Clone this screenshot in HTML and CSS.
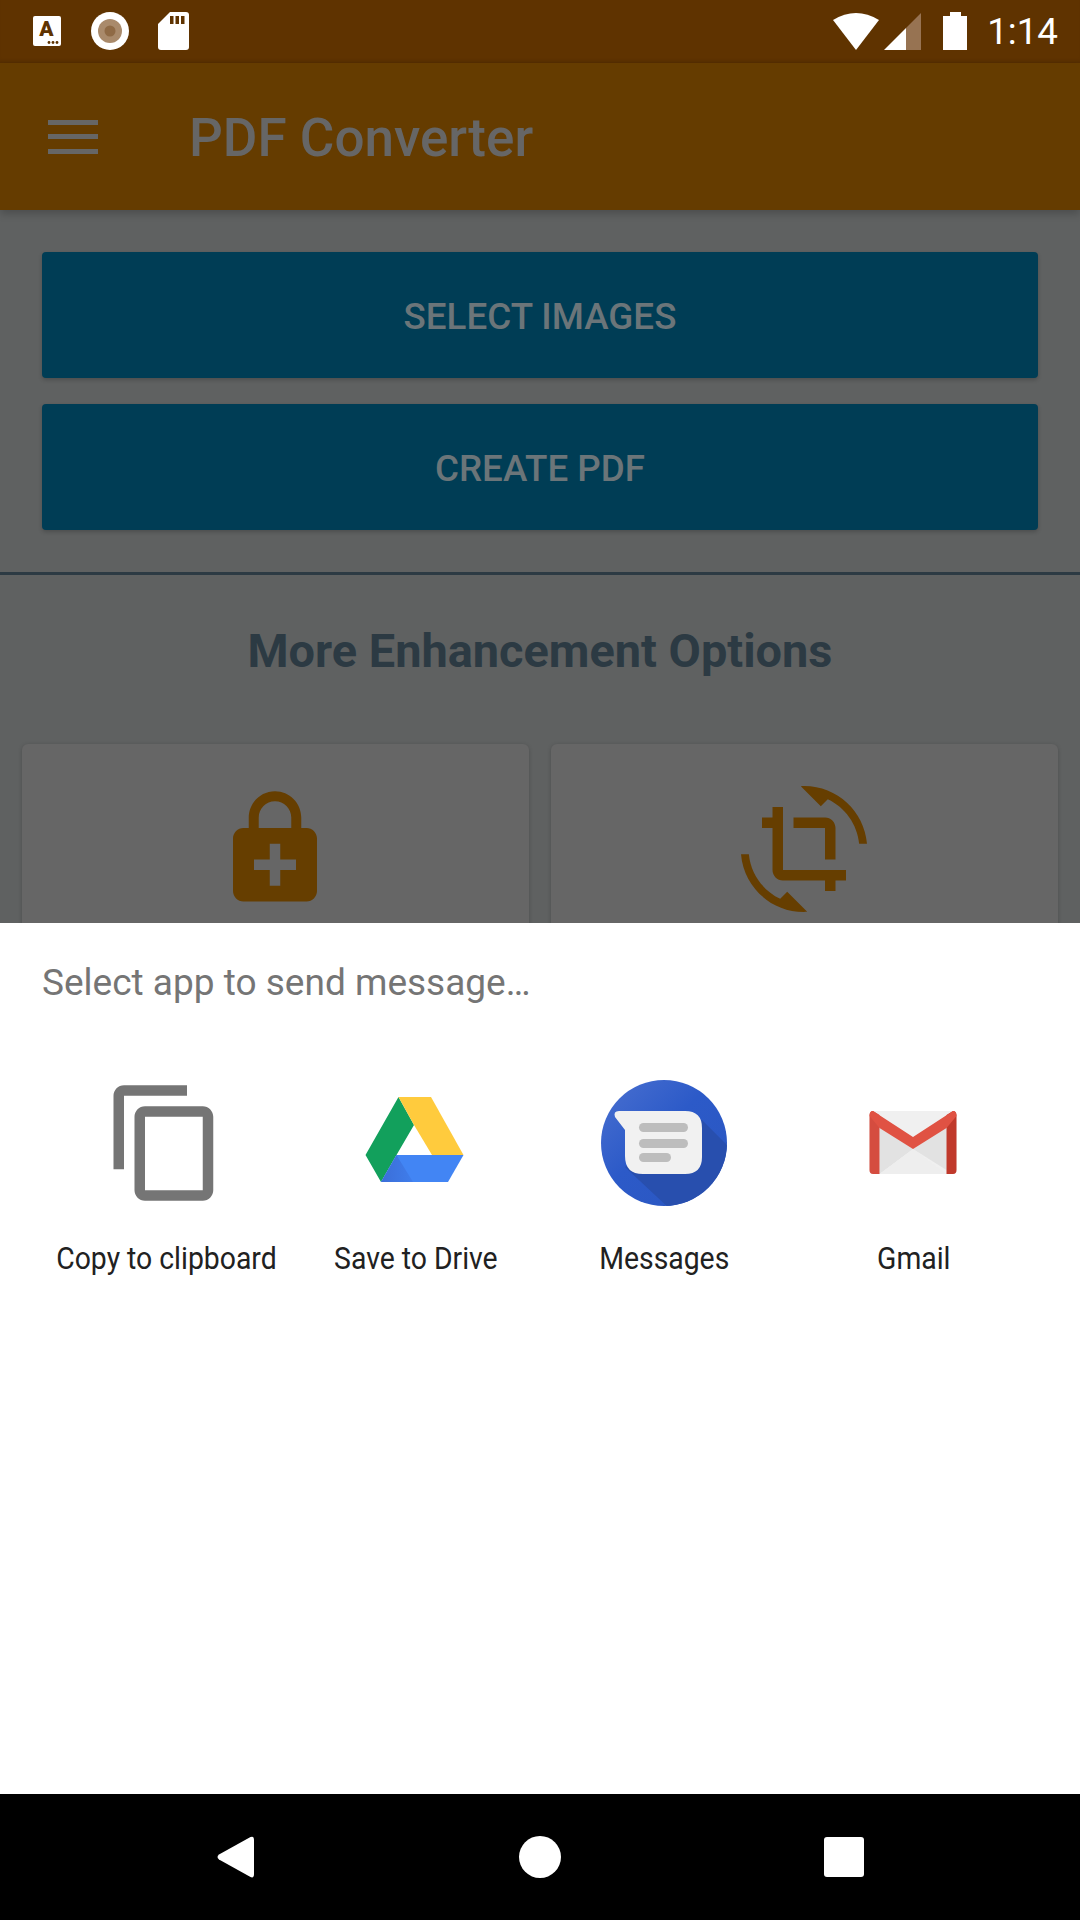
FILE: index.html
```html
<!DOCTYPE html>
<html lang="en">

<head>
    <meta charset="UTF-8">
    <meta name="viewport" content="width=device-width, initial-scale=1.0">
    <title>PDF Converter</title>
    <link rel="stylesheet" href="styles.css">
</head>

<body>
    <div id="tela">
        <div class="status-bar">
            <svg class="st-a" viewBox="0 0 28 30">
                <rect width="28" height="30" rx="2" fill="#fff" />
                <text x="13.5" y="20" text-anchor="middle" class="st-a-letra">A</text>
                <circle cx="16" cy="26.5" r="1.4" fill="#5f3300" />
                <circle cx="20" cy="26.5" r="1.4" fill="#5f3300" />
                <circle cx="24" cy="26.5" r="1.4" fill="#5f3300" />
            </svg>
            <svg class="st-disco" viewBox="0 0 38 38">
                <circle cx="19" cy="19" r="19" fill="#fff" />
                <circle cx="19" cy="19" r="12" fill="#a98a6b" />
                <circle cx="19" cy="19" r="5.5" fill="#8f6a45" />
            </svg>
            <svg class="st-sd" viewBox="0 0 31 38">
                <path d="M12 0H28Q31 0 31 3V35Q31 38 28 38H3Q0 38 0 35V12Z" fill="#fff" />
                <rect x="12" y="4" width="3.5" height="8" fill="#5f3300" />
                <rect x="17.5" y="4" width="3.5" height="8" fill="#5f3300" />
                <rect x="23" y="4" width="3.5" height="8" fill="#5f3300" />
            </svg>
            <div class="status-direita">
                <svg class="st-wifi" viewBox="0 0 46 37">
                    <path d="M0 7Q23 -7 46 7L23 37Z" fill="#fff" />
                </svg>
                <svg class="st-sinal" viewBox="0 0 37 37">
                    <path d="M37 0V37H22V15Z" fill="#977352" />
                    <path d="M22 15V37H0Z" fill="#fff" />
                </svg>
                <svg class="st-bateria" viewBox="0 0 24 38">
                    <path d="M7 0H18V4H24V38H0V4H7Z" fill="#fff" />
                </svg>
                <span class="status-hora">1:14</span>
            </div>
        </div>

        <div class="app-bar">
            <svg class="menu-icone" viewBox="0 0 50 34">
                <rect y="0" width="50" height="5" fill="#666" />
                <rect y="14" width="50" height="5" fill="#666" />
                <rect y="29" width="50" height="5" fill="#666" />
            </svg>
            <span class="app-titulo">PDF Converter</span>
        </div>

        <div class="conteudo">
            <div class="botoes">
                <div class="botao">SELECT IMAGES</div>
                <div class="botao">CREATE PDF</div>
            </div>
            <div class="divisor"></div>
            <h2 class="subtitulo">More Enhancement Options</h2>
            <div class="cards">
                <div class="card">
                    <svg class="card-icone" viewBox="0 0 24 24">
                        <path d="M18 8h-1V6c0-2.76-2.24-5-5-5S7 3.24 7 6v2H6c-1.1 0-2 .9-2 2v10c0 1.1.9 2 2 2h12c1.1 0 2-.9 2-2V10c0-1.1-.9-2-2-2zM8.9 6c0-1.71 1.39-3.1 3.1-3.1s3.1 1.39 3.1 3.1v2H8.9V6zM16 16h-3v3h-2v-3H8v-2h3v-3h2v3h3v2z" />
                    </svg>
                </div>
                <div class="card">
                    <svg class="card-icone" viewBox="0 0 24 24">
                        <path d="M7.47 21.49C4.2 19.93 1.86 16.76 1.5 13H0c.51 6.16 5.66 11 11.95 11 .23 0 .44-.02.66-.03L8.8 20.15l-1.33 1.34zM12.05 0c-.23 0-.44.02-.66.04l3.81 3.81 1.33-1.33C19.8 4.07 22.14 7.24 22.5 11H24c-.51-6.16-5.66-11-11.95-11zM16 14h2V8c0-1.11-.9-2-2-2h-6v2h6v6zm-8 2V4H6v2H4v2h2v8c0 1.1.89 2 2 2h8v2h2v-2h2v-2H8z" />
                    </svg>
                </div>
            </div>
        </div>

        <div class="sheet">
            <p class="sheet-titulo">Select app to send message…</p>
            <div class="apps">
                <div class="app">
                    <svg class="app-icone" viewBox="0 0 24 24">
                        <path fill="#757575" d="M16 1H4c-1.1 0-2 .9-2 2v14h2V3h12V1zm3 4H8c-1.1 0-2 .9-2 2v14c0 1.1.9 2 2 2h11c1.1 0 2-.9 2-2V7c0-1.1-.9-2-2-2zm0 16H8V7h11v14z" />
                    </svg>
                    <span class="app-nome">Copy to clipboard</span>
                </div>
                <div class="app">
                    <svg class="app-icone" viewBox="0 0 126 126">
                        <defs>
                            <linearGradient id="driveSombra" x1="0" y1="0" x2="1" y2="0">
                                <stop offset="0" stop-color="#3b6ed8" />
                                <stop offset="1" stop-color="#3f7deb" />
                            </linearGradient>
                        </defs>
                        <path fill="#12a05c" d="M46.5 17L62 45L44.5 75L29 102L13.5 75Z" />
                        <path fill="#ffcb3d" d="M46.5 17H79L111.5 75H80L62 45Z" />
                        <path fill="#4285f4" d="M44.5 75H111.5L96 102H29Z" />
                        <path fill="url(#driveSombra)" d="M44.5 75L29 102H61Z" />
                    </svg>
                    <span class="app-nome">Save to Drive</span>
                </div>
                <div class="app">
                    <svg class="app-icone" viewBox="0 0 126 126">
                        <defs>
                            <clipPath id="msgCirculo">
                                <circle cx="63" cy="63" r="63" />
                            </clipPath>
                            <linearGradient id="msgBrilho" x1="0" y1="0" x2="1" y2="1">
                                <stop offset="0" stop-color="#4a70d0" />
                                <stop offset="0.45" stop-color="#2c5ac8" />
                                <stop offset="1" stop-color="#2a56c0" />
                            </linearGradient>
                        </defs>
                        <circle cx="63" cy="63" r="63" fill="url(#msgBrilho)" />
                        <path clip-path="url(#msgCirculo)" fill="#284fae" d="M101 40L130 69V130H70L24 87Z" />
                        <path fill="#f1f1f1" d="M18 31H84Q101 31 101 48V77Q101 94 84 94H42Q24 94 24 76V50L14 37Q12 31 18 31Z" />
                        <rect x="38" y="43" width="49" height="9" rx="4.5" fill="#bdbdbd" />
                        <rect x="38" y="59" width="49" height="9" rx="4.5" fill="#bdbdbd" />
                        <rect x="38" y="73" width="32" height="9" rx="4.5" fill="#bdbdbd" />
                    </svg>
                    <span class="app-nome">Messages</span>
                </div>
                <div class="app">
                    <svg class="app-icone" viewBox="-1 0 126 126">
                        <rect x="18.5" y="31" width="87" height="63" rx="4" fill="#f0f0f0" />
                        <path fill="#e2e2e2" d="M28.5 46L62 69L95.5 46V90L62 69L28.5 94Z" />
                        <path fill="#eeeeee" d="M28.5 94L62 69L95.5 94Z" />
                        <path fill="#d54c3f" d="M18.5 36Q18.5 31 22 31L28.5 35V94H22Q18.5 94 18.5 90Z" />
                        <path fill="#c0392b" d="M105.5 36Q105.5 31 102 31L95.5 35V94H102Q105.5 94 105.5 90Z" />
                        <path fill="#e05243" d="M22 31L62 57L102 31Q105.5 31 105.5 36L95.5 48L62 69L28.5 48L18.5 36Q18.5 31 22 31Z" />
                    </svg>
                    <span class="app-nome">Gmail</span>
                </div>
            </div>
        </div>

        <div class="nav-bar">
            <svg class="nav-voltar" viewBox="0 0 37 42">
                <path d="M33.5 1L2 18.5Q-1 21 2 23.5L33.5 41Q37 42.5 37 38V4Q37 -0.5 33.5 1Z" fill="#fff" />
            </svg>
            <div class="nav-home"></div>
            <div class="nav-recentes"></div>
        </div>
    </div>
</body>

</html>
```

FILE: styles.css
```css
* {
    box-sizing: border-box;
}

body {
    margin: 0;
    font-family: Roboto, sans-serif;
    background-color: #fff;
}

#tela {
    width: 1080px;
    height: 1920px;
    display: flex;
    flex-direction: column;
    overflow: hidden;
}

svg {
    display: block;
}

/* barra de status */
.status-bar {
    height: 63px;
    flex-shrink: 0;
    display: flex;
    align-items: flex-start;
    padding: 12px 22px 0 33px;
    background-color: #5f3300;
    box-shadow: inset 0 -4px 4px -3px rgba(0, 0, 0, 0.15);
}

.st-a {
    width: 28px;
    height: 30px;
    margin-top: 4px;
}

.st-a-letra {
    font-family: Roboto, sans-serif;
    font-size: 21px;
    font-weight: 900;
    fill: #5f3300;
}

.st-disco {
    width: 38px;
    height: 38px;
    margin-left: 30px;
}

.st-sd {
    width: 31px;
    height: 38px;
    margin-left: 29px;
}

.status-direita {
    margin-left: auto;
    display: flex;
    align-items: flex-start;
}

.st-wifi {
    width: 46px;
    height: 37px;
    margin-top: 1px;
}

.st-sinal {
    width: 37px;
    height: 37px;
    margin-top: 1px;
    margin-left: 5px;
}

.st-bateria {
    width: 24px;
    height: 38px;
    margin-left: 22px;
}

.status-hora {
    margin-left: 20px;
    font-size: 36.75px;
    line-height: 40px;
    color: #fff;
}

/* app bar */
.app-bar {
    height: 147px;
    flex-shrink: 0;
    display: flex;
    align-items: center;
    padding-left: 48px;
    background-color: #653c00;
    box-shadow: 0 4px 8px rgba(0, 0, 0, 0.2);
    position: relative;
}

.menu-icone {
    width: 50px;
    height: 34px;
}

.app-titulo {
    margin-left: 91px;
    padding-top: 2px;
    font-size: 53px;
    font-weight: 500;
    color: #666;
}

/* conteudo escurecido */
.conteudo {
    flex: 1;
    min-height: 0;
    overflow: hidden;
    background-color: #5f6161;
}

.botoes {
    padding: 42px 42px;
    display: flex;
    flex-direction: column;
    gap: 26px;
}

.botao {
    height: 126px;
    padding-top: 2px;
    display: flex;
    align-items: center;
    justify-content: center;
    background-color: #003d55;
    border-radius: 4px;
    box-shadow: 0 2px 4px rgba(0, 0, 0, 0.2);
    font-size: 36.75px;
    font-weight: 500;
    color: #6b7579;
}

.divisor {
    height: 3px;
    background-color: #2c3a43;
}

.subtitulo {
    margin: 49px 0 66px;
    font-size: 46.9px;
    line-height: 54px;
    font-weight: 700;
    text-align: center;
    color: #2c3a43;
}

.cards {
    display: grid;
    grid-template-columns: 507px 507px;
    gap: 22px;
    padding: 0 22px;
}

.card {
    height: 300px;
    padding-top: 42px;
    padding-right: 2px;
    display: flex;
    justify-content: center;
    background-color: #666;
    border-radius: 6px;
    box-shadow: 0 1px 4px rgba(0, 0, 0, 0.2);
}

.card-icone {
    width: 126px;
    height: 126px;
    fill: #663e00;
}

/* folha de compartilhar */
.sheet {
    height: 871px;
    flex-shrink: 0;
    padding: 39px 42px 0;
    background-color: #fff;
    position: relative;
}

.sheet-titulo {
    margin: 0;
    font-size: 37px;
    line-height: 42px;
    color: #757575;
}

.apps {
    display: grid;
    grid-template-columns: repeat(4, 249px);
    margin-top: 76px;
    margin-left: -1px;
}

.app {
    display: flex;
    flex-direction: column;
    align-items: center;
}

.app-icone {
    width: 126px;
    height: 126px;
}

/* o texto do android sai mais estreito que o Roboto normal */
.app-nome {
    margin-top: 33px;
    margin-left: 2px;
    font-size: 31.5px;
    line-height: 40px;
    color: #212121;
    white-space: nowrap;
    transform: scaleX(0.9);
}

/* barra de navegacao */
.nav-bar {
    height: 126px;
    flex-shrink: 0;
    display: flex;
    align-items: center;
    background-color: #000;
}

.nav-voltar {
    width: 37px;
    height: 42px;
    margin-left: 217px;
}

.nav-home {
    width: 42px;
    height: 42px;
    margin-left: 265px;
    border-radius: 50%;
    background-color: #fff;
}

.nav-recentes {
    width: 40px;
    height: 40px;
    margin-left: 263px;
    border-radius: 3px;
    background-color: #fff;
}
```
